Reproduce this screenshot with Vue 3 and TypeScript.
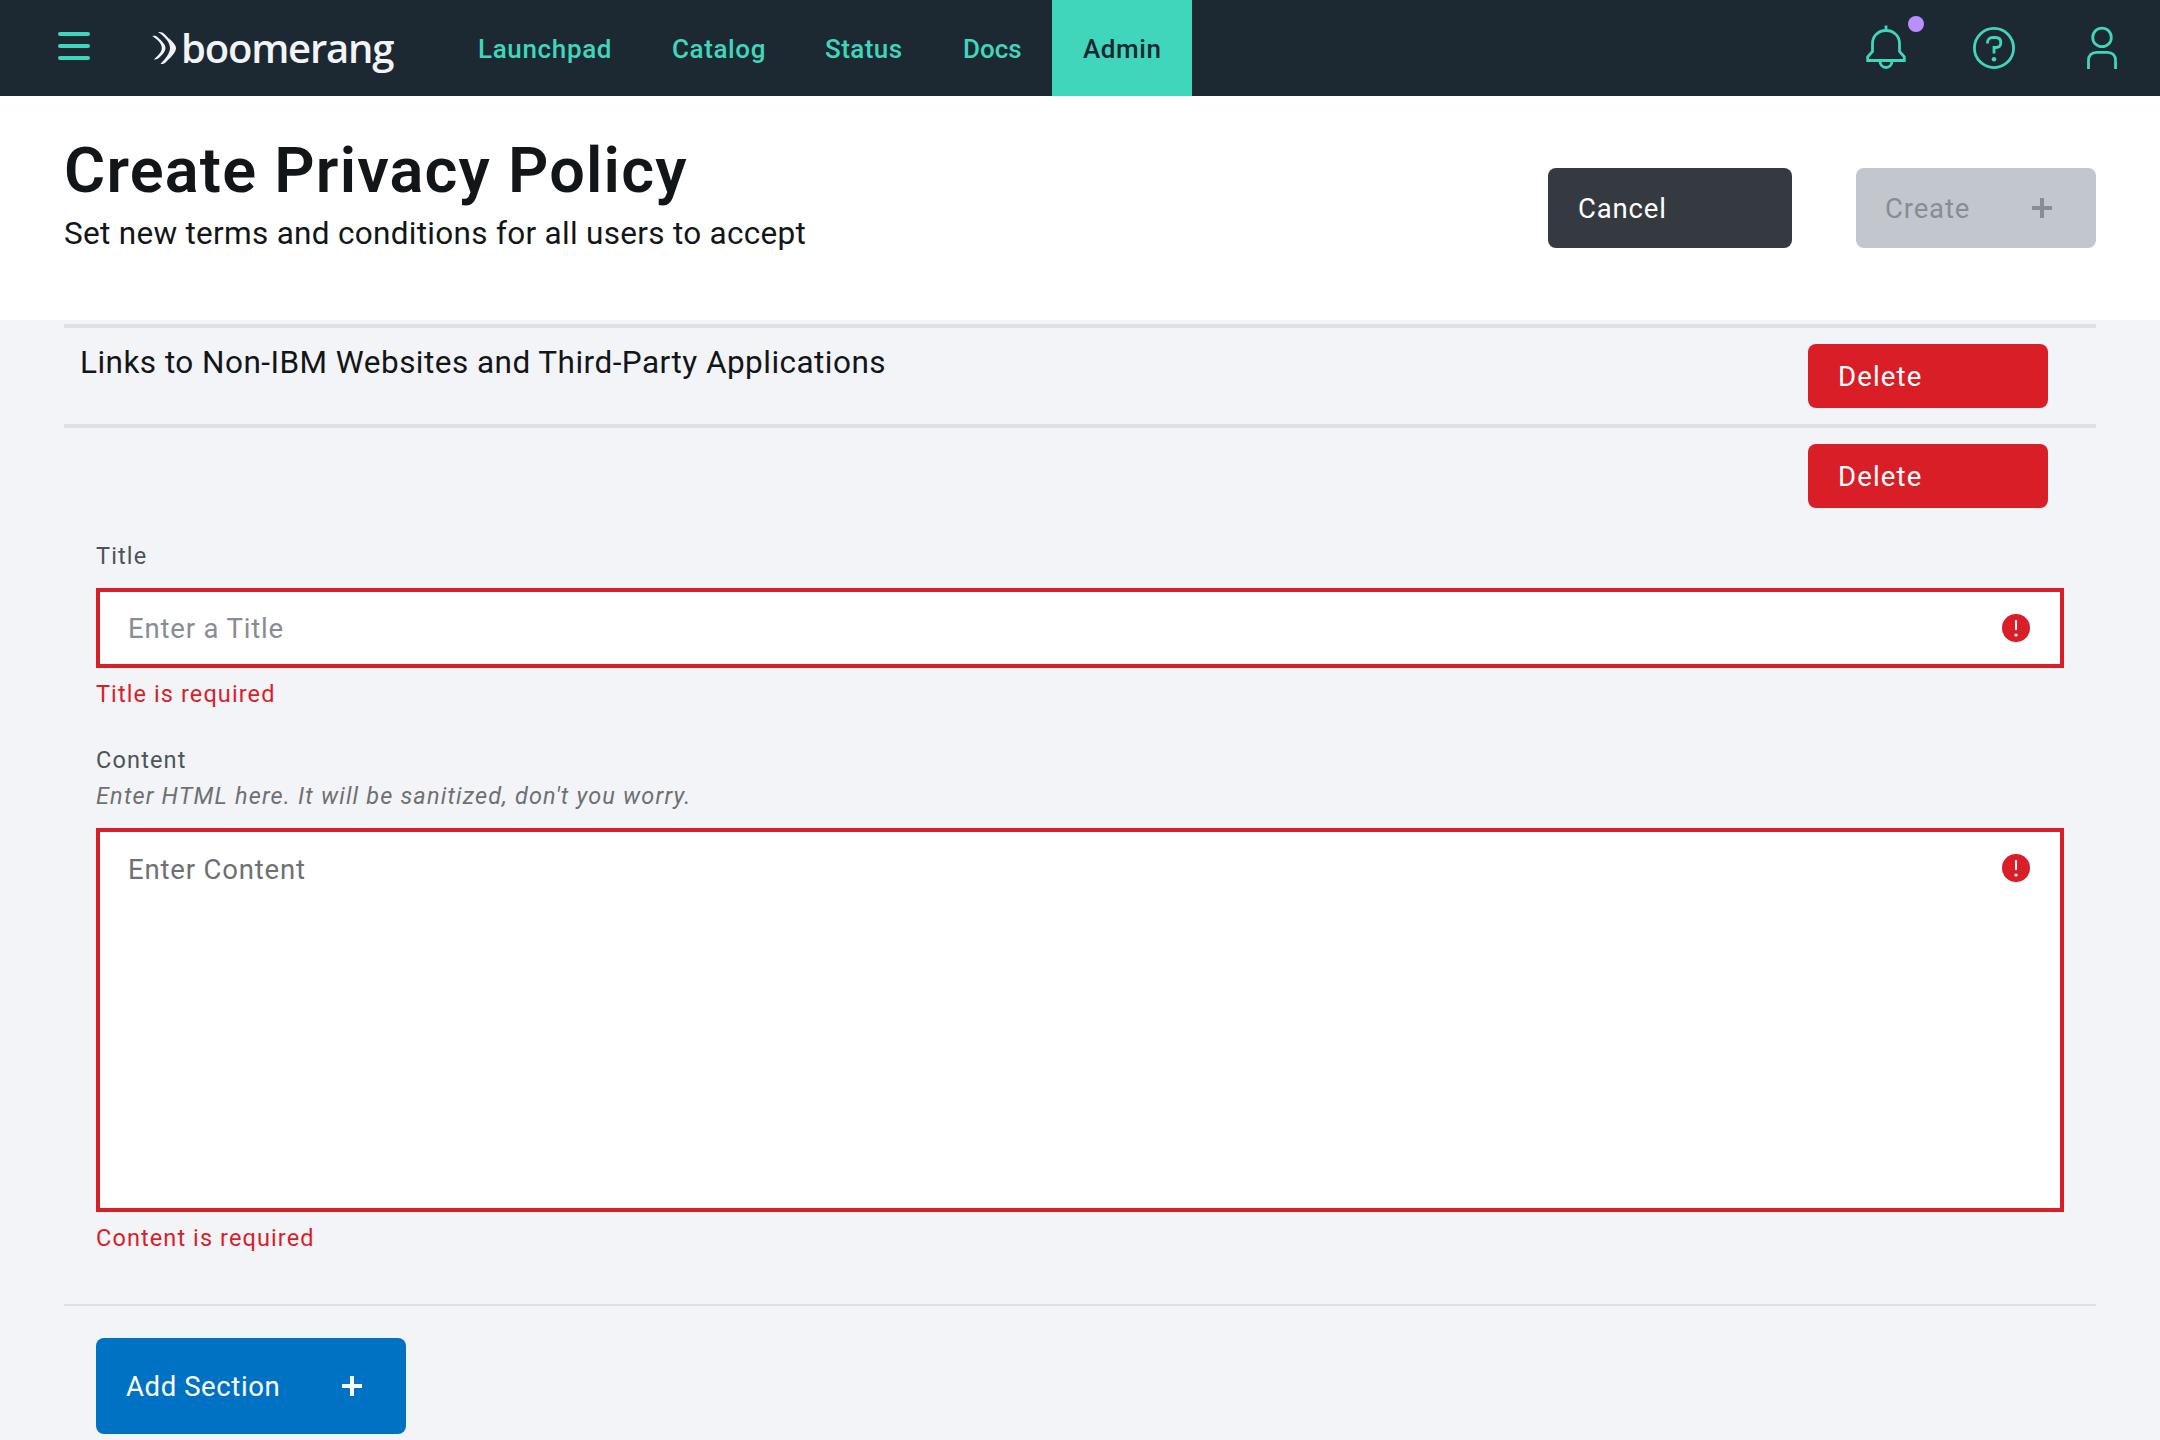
<script setup lang="ts">
interface NavItem {
  label: string
  width: number
  spacing: number
  active?: boolean
}

const navItems: NavItem[] = [
  { label: 'Launchpad', width: 194, spacing: 0.65 },
  { label: 'Catalog', width: 153, spacing: 0.6 },
  { label: 'Status', width: 138, spacing: 0.45 },
  { label: 'Docs', width: 120, spacing: 0 },
  { label: 'Admin', width: 140, spacing: 0.6, active: true },
]
</script>

<template>
  <div class="page">
    <header class="topbar">
      <button class="menu" aria-label="Menu"><span /><span /><span /></button>
      <div class="brand">
        <svg class="brand-mark" width="26" height="34" viewBox="0 0 26 34">
          <path d="M.3 5C3 4.600 4.500 5 6 6.500C9 9.500 13.500 13 13.500 17C13.500 20.500 10 24 7 26.800C5.300 28.400 4 28.600 2 28.400C5.500 25 9.800 21.500 9.800 17C9.800 12 4.500 8 .3 5Z" />
          <path d="M6 1C9 .7 11 1.300 13 3.500C17 8 24 12.500 24 17C24 21.500 19 26 14.500 30.500C12.500 32.900 11 33.200 8.500 33C13 28 18 22.500 18 17C18 11 12 5 6 1Z" />
        </svg>
        <span class="brand-name">boomerang</span>
      </div>
      <nav class="nav">
        <a
          v-for="item in navItems"
          :key="item.label"
          class="nav-item"
          :class="{ active: item.active }"
          :style="{ width: item.width + 'px', letterSpacing: item.spacing + 'px' }"
        >{{ item.label }}</a>
      </nav>
      <div class="tools">
        <div class="tool bell">
          <svg width="48" height="48" viewBox="0 0 48 48">
            <path d="M24 5.500V1.500M24 6.500C15.800 6.500 10.500 12.500 10.500 19.500V27.500L5.700 32.800V36.500H42.300V32.800L37.500 27.500V19.500C37.500 12.500 32.200 6.500 24 6.500ZM18 36.500C18 41 20.500 43.500 24 43.500S30 41 30 36.500" />
          </svg>
          <span class="dot" />
        </div>
        <div class="tool">
          <svg width="48" height="48" viewBox="0 0 48 48">
            <circle cx="24" cy="24" r="19.600" />
            <path d="M17.500 19.500V18.500C17.500 15.500 19.500 13.500 22.500 13.500H25.500C29 13.500 30.800 15.600 30.800 18.500C30.800 21.500 29 23.500 26 23.500H24V29.500" />
            <circle class="solid" cx="24" cy="35.200" r="2.300" />
          </svg>
        </div>
        <div class="tool">
          <svg width="48" height="48" viewBox="0 0 48 48">
            <circle cx="24" cy="13.400" r="9.300" />
            <path d="M10.500 45V36.500C10.500 31.500 13.500 28.400 18.500 28.400H29.500C34.500 28.400 37.500 31.500 37.500 36.500V45" />
          </svg>
        </div>
      </div>
    </header>

    <section class="heading">
      <div class="heading-text">
        <h1>Create Privacy Policy</h1>
        <p>Set new terms and conditions for all users to accept</p>
      </div>
      <div class="heading-actions">
        <button class="btn cancel">Cancel</button>
        <button class="btn create" disabled>
          <span>Create</span>
          <svg width="20" height="20" viewBox="0 0 20 20"><path d="M8 0h4v8h8v4h-8v8H8v-8H0V8h8z" /></svg>
        </button>
      </div>
    </section>

    <main class="sections">
      <div class="section-row">
        <h2>Links to Non-IBM Websites and Third-Party Applications</h2>
        <button class="btn delete">Delete</button>
      </div>
      <div class="section-row">
        <h2></h2>
        <button class="btn delete">Delete</button>
      </div>

      <form class="form" @submit.prevent>
        <label class="label" for="title">Title</label>
        <div class="field title-field">
          <input id="title" placeholder="Enter a Title" />
          <svg width="28" height="28" viewBox="0 0 28 28">
            <circle cx="14" cy="14" r="14" />
            <path d="M13 6h2v10h-2z" /><circle class="mark" cx="14" cy="21" r="1.600" />
          </svg>
        </div>
        <p class="error">Title is required</p>

        <label class="label content-label" for="content">Content</label>
        <p class="helper">Enter HTML here. It will be sanitized, don't you worry.</p>
        <div class="field content-field">
          <textarea id="content" placeholder="Enter Content"></textarea>
          <svg width="28" height="28" viewBox="0 0 28 28">
            <circle cx="14" cy="14" r="14" />
            <path d="M13 6h2v10h-2z" /><circle class="mark" cx="14" cy="21" r="1.600" />
          </svg>
        </div>
        <p class="error">Content is required</p>
      </form>

      <div class="footer">
        <button class="btn add">
          <span>Add Section</span>
          <svg width="20" height="20" viewBox="0 0 20 20"><path d="M8 0h4v8h8v4h-8v8H8v-8H0V8h8z" /></svg>
        </button>
      </div>
    </main>
  </div>
</template>

<style>
body {
  margin: 0;
  background: #f2f4f8;
}
</style>

<style scoped>
.page {
  width: 2160px;
  height: 1440px;
  overflow: hidden;
  background: #f2f4f8;
  color: #121619;
  font-family: Roboto, "Noto Sans", sans-serif;
  font-weight: 370;
}
.page * {
  box-sizing: border-box;
}
h1, h2, p {
  margin: 0;
  font-weight: inherit;
}
button, input, textarea {
  font: inherit;
  border: 0;
  outline: 0;
}

.topbar {
  display: flex;
  height: 96px;
  background: #1c2832;
}
.menu {
  display: flex;
  flex-direction: column;
  gap: 8px;
  width: 90px;
  padding: 32px 0 0 58px;
  background: none;
}
.menu span {
  width: 32px;
  height: 4px;
  border-radius: 2px;
  background: #40d6bb;
}
.brand {
  display: flex;
  width: 357px;
  padding-left: 62px;
}
.brand-mark {
  margin-top: 31px;
  flex: none;
  fill: #f2f4f8;
}
.brand-name {
  padding-left: 3px;
  line-height: 95px;
  font-family: "Open Sans", sans-serif;
  font-size: 40px;
  font-weight: 650;
  letter-spacing: -1.2px;
  color: #f2f4f8;
}
.nav {
  display: flex;
}
.nav-item {
  padding: 2px 0 0 31px;
  line-height: 94px;
  font-size: 26px;
  font-weight: 480;
  color: #40d6bb;
  white-space: nowrap;
}
.nav-item.active {
  background: #40d6bb;
  color: #1c2832;
}
.tools {
  display: flex;
  gap: 60px;
  margin-left: auto;
  padding: 24px 34px 0 0;
}
.tool {
  position: relative;
  width: 48px;
  height: 48px;
}
.tool svg {
  display: block;
  fill: none;
  stroke: #40d6bb;
  stroke-width: 2.8;
}
.tool .solid {
  fill: #40d6bb;
  stroke: none;
}
.dot {
  position: absolute;
  top: -8px;
  right: -14px;
  width: 16px;
  height: 16px;
  border-radius: 50%;
  background: #bb8eff;
}

.heading {
  display: flex;
  justify-content: space-between;
  height: 224px;
  padding: 0 64px;
  background: #fff;
}
h1 {
  padding-top: 39px;
  line-height: 72px;
  font-size: 63px;
  font-weight: 600;
  letter-spacing: 1.2px;
}
.heading-text p {
  padding-top: 6px;
  line-height: 42px;
  font-size: 31.500px;
  letter-spacing: 0.3px;
}
.heading-actions {
  display: flex;
  gap: 64px;
  padding-top: 72px;
}
.btn {
  display: flex;
  align-items: center;
  justify-content: space-between;
  padding: 1px 30px 0;
  border-radius: 8px;
  font-size: 27.500px;
  letter-spacing: 0.85px;
  color: #fff;
}
.btn svg {
  margin-top: -1px;
  fill: currentColor;
}
.cancel {
  width: 244px;
  height: 80px;
  background: #343a3f;
}
.create {
  width: 240px;
  height: 80px;
  padding-left: 29px;
  padding-right: 44px;
  background: #c1c7cd;
  color: #878d96;
}

.sections {
  padding: 4px 64px 0;
}
.section-row {
  display: flex;
  justify-content: space-between;
  height: 100px;
  padding: 16px 48px 0 16px;
  border-top: 4px solid #dde1e6;
}
h2 {
  line-height: 38px;
  font-size: 31.500px;
  letter-spacing: 0.47px;
}
.delete {
  width: 240px;
  height: 64px;
  background: #da1e28;
  letter-spacing: 1.15px;
}

.form {
  height: 782px;
  padding: 16px 32px 0;
  border-bottom: 2px solid #dde1e6;
}
.label {
  display: block;
  line-height: 32px;
  font-size: 23.500px;
  letter-spacing: 1.15px;
  color: #4d5358;
}
.field {
  display: flex;
  justify-content: space-between;
  padding-right: 30px;
  border: 4px solid #da1e28;
  background: #fff;
}
.field svg {
  flex: none;
  margin-top: 22px;
  fill: #da1e28;
}
.field svg path,
.field .mark {
  fill: #fff;
}
.title-field {
  height: 80px;
  margin-top: 16px;
}
input, textarea {
  flex: 1;
  padding: 0 0 0 28px;
  background: none;
  resize: none;
  font-size: 27.500px;
  letter-spacing: 0.83px;
}
input::placeholder {
  color: #878d96;
  opacity: 1;
}
textarea::placeholder {
  color: #6f7072;
  opacity: 1;
}
.error {
  padding-top: 10px;
  line-height: 32px;
  font-size: 23.500px;
  letter-spacing: 1.1px;
  color: #da1e28;
}
.content-label {
  margin-top: 34px;
}
.helper {
  padding-top: 4px;
  line-height: 32px;
  font-size: 23.500px;
  font-style: italic;
  letter-spacing: 1.17px;
  color: #6f7072;
}
.content-field {
  height: 384px;
  margin-top: 16px;
}
textarea {
  padding-top: 22px;
  line-height: 32px;
}

.footer {
  padding: 32px 32px 0;
}
.add {
  width: 310px;
  height: 96px;
  padding-right: 44px;
  background: #0072c3;
  letter-spacing: 0.6px;
}
</style>
